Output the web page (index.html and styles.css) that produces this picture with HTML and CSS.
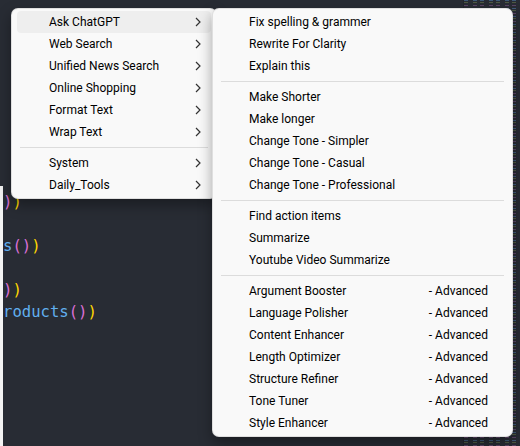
FILE: index.html
```html
<!DOCTYPE html>
<html>
<head>
<meta charset="utf-8">
<link rel="stylesheet" href="styles.css">
</head>
<body>
<div class="editor">
  <div class="edge"></div>
  <div class="code">
    <div class="line"></div>
    <div class="line"></div>
    <div class="line"></div>
    <div class="line"></div>
    <div class="line"></div>
    <div class="line"></div>
    <div class="line"></div>
    <div class="line"></div>
    <div class="line"><span class="p">)</span><span class="y">)</span></div>
    <div class="line"></div>
    <div class="line"><span class="f">s</span><span class="p">()</span><span class="y">)</span></div>
    <div class="line"></div>
    <div class="line"><span class="p">)</span><span class="y">)</span></div>
    <div class="line"><span class="f">roducts</span><span class="p">()</span><span class="y">)</span></div>
  </div>
  <div class="minimap"></div>
</div>

<div class="menu menu-main">
  <div class="item active"><span class="label">Ask ChatGPT</span><svg class="chev" viewBox="0 0 6 10"><path d="M1 1l4 4-4 4"/></svg></div>
  <div class="item"><span class="label">Web Search</span><svg class="chev" viewBox="0 0 6 10"><path d="M1 1l4 4-4 4"/></svg></div>
  <div class="item"><span class="label">Unified News Search</span><svg class="chev" viewBox="0 0 6 10"><path d="M1 1l4 4-4 4"/></svg></div>
  <div class="item"><span class="label">Online Shopping</span><svg class="chev" viewBox="0 0 6 10"><path d="M1 1l4 4-4 4"/></svg></div>
  <div class="item"><span class="label">Format Text</span><svg class="chev" viewBox="0 0 6 10"><path d="M1 1l4 4-4 4"/></svg></div>
  <div class="item"><span class="label">Wrap Text</span><svg class="chev" viewBox="0 0 6 10"><path d="M1 1l4 4-4 4"/></svg></div>
  <div class="sep"></div>
  <div class="item"><span class="label">System</span><svg class="chev" viewBox="0 0 6 10"><path d="M1 1l4 4-4 4"/></svg></div>
  <div class="item"><span class="label">Daily_Tools</span><svg class="chev" viewBox="0 0 6 10"><path d="M1 1l4 4-4 4"/></svg></div>
</div>

<div class="menu menu-sub">
  <div class="item"><span class="label">Fix spelling &amp; grammer</span></div>
  <div class="item"><span class="label">Rewrite For Clarity</span></div>
  <div class="item"><span class="label">Explain this</span></div>
  <div class="sep"></div>
  <div class="item"><span class="label">Make Shorter</span></div>
  <div class="item"><span class="label">Make longer</span></div>
  <div class="item"><span class="label">Change Tone - Simpler</span></div>
  <div class="item"><span class="label">Change Tone - Casual</span></div>
  <div class="item"><span class="label">Change Tone - Professional</span></div>
  <div class="sep"></div>
  <div class="item"><span class="label">Find action items</span></div>
  <div class="item"><span class="label">Summarize</span></div>
  <div class="item"><span class="label">Youtube Video Summarize</span></div>
  <div class="sep"></div>
  <div class="item"><span class="label">Argument Booster</span><span class="hint">- Advanced</span></div>
  <div class="item"><span class="label">Language Polisher</span><span class="hint">- Advanced</span></div>
  <div class="item"><span class="label">Content Enhancer</span><span class="hint">- Advanced</span></div>
  <div class="item"><span class="label">Length Optimizer</span><span class="hint">- Advanced</span></div>
  <div class="item"><span class="label">Structure Refiner</span><span class="hint">- Advanced</span></div>
  <div class="item"><span class="label">Tone Tuner</span><span class="hint">- Advanced</span></div>
  <div class="item"><span class="label">Style Enhancer</span><span class="hint">- Advanced</span></div>
</div>
</body>
</html>
```

FILE: styles.css
```css
html, body {
  margin: 0;
  padding: 0;
  width: 520px;
  height: 446px;
  overflow: hidden;
  background: #282c34;
}

.editor {
  display: grid;
  grid-template-columns: 3px 1fr 57px;
  height: 446px;
}

.edge {
  background: #f3f3f3;
  margin-top: 186px;
}

.code {
  padding-top: 15px;
  font-family: "DejaVu Sans Mono", monospace;
  font-size: 15.6px;
}

.line {
  height: 22px;
  line-height: 22px;
  white-space: pre;
}

.f { color: #61afef; }
.p { color: #da70d6; }
.y { color: #ffd700; }

.minimap {
  background:
    repeating-linear-gradient(90deg, transparent 0 4px, #282c34 4px 9px, transparent 9px 13px, #282c34 13px 16px),
    repeating-linear-gradient(180deg, #3e5a78 0 1px, #282c34 1px 2px, #4d5a42 2px 3px, #282c34 3px 5px, #5b4466 5px 6px, #282c34 6px 8px);
  border-left: 1px solid #23262d;
}

.menu {
  position: absolute;
  top: 8px;
  box-sizing: border-box;
  background: #f9f9f9;
  border: 1px solid rgba(0,0,0,0.1);
  border-radius: 7px;
  padding: 2px 0;
  box-shadow: 0 6px 14px rgba(0,0,0,0.35);
  font-family: Roboto, "Liberation Sans", sans-serif;
  font-size: 12px;
  color: #000;
}

.menu-main {
  left: 11px;
  width: 206px;
  z-index: 1;
}

.menu-sub {
  left: 212px;
  width: 301px;
  z-index: 2;
}

.item {
  height: 22px;
  margin: 0 5px;
  display: flex;
  align-items: center;
  justify-content: space-between;
  border-radius: 4px;
}

.menu-main .item {
  padding: 0 10px 0 32px;
}

.menu-sub .item {
  padding: 0 19px 0 31px;
}

.item.active {
  background: #eeeeee;
}

.chev {
  width: 6px;
  height: 10px;
  fill: none;
  stroke: #333;
  stroke-width: 1.2;
}

.sep {
  height: 1px;
  background: #dcdcdc;
  margin: 4px 8px;
}
```
